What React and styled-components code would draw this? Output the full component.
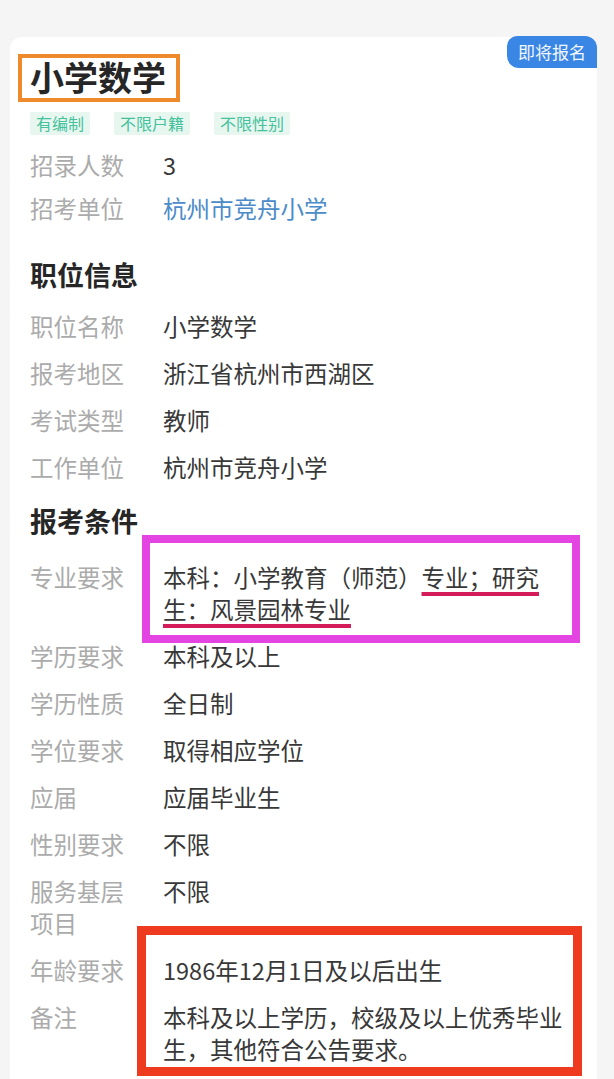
import styled, { createGlobalStyle } from "styled-components";

const GlobalStyle = createGlobalStyle`
  body {
    margin: 0;
    background: #f5f5f5;
    font-family: "Noto Sans CJK SC", "Noto Sans", sans-serif;
  }
`;

function Row({ label, blue, children }) {
  return (
    <RowWrap>
      <Label>{label}</Label>
      <Value $blue={blue}>{children}</Value>
    </RowWrap>
  );
}

function App() {
  return (
    <Page>
      <GlobalStyle />
      <Card>
        <Badge>即将报名</Badge>

        <Title>
          小学数学
          <Frame $color="#ef8a2c" $width={4} $top={-3} $left={-12} $right={-14} $bottom={-5} />
        </Title>

        <Tags>
          <Tag>有编制</Tag>
          <Tag>不限户籍</Tag>
          <Tag>不限性别</Tag>
        </Tags>

        <List $top={14} $gap={11}>
          <Row label="招录人数">3</Row>
          <Row label="招考单位" blue>
            杭州市竞舟小学
          </Row>
        </List>

        <Heading $top={33}>职位信息</Heading>
        <List $top={17} $gap={15}>
          <Row label="职位名称">小学数学</Row>
          <Row label="报考地区">浙江省杭州市西湖区</Row>
          <Row label="考试类型">教师</Row>
          <Row label="工作单位">杭州市竞舟小学</Row>
        </List>

        <Heading $top={20}>报考条件</Heading>
        <List $top={22} $gap={15}>
          <RowWrap>
            <Label>专业要求</Label>
            <Value>
              本科：小学教育（师范）<Marked>专业；研究</Marked>
              <Marked>生：风景园林专业</Marked>
              <Frame $color="#e445e2" $width={8} $top={-26} $left={-21} $right={-7} $bottom={-18} />
            </Value>
          </RowWrap>
          <Row label="学历要求">本科及以上</Row>
          <Row label="学历性质">全日制</Row>
          <Row label="学位要求">取得相应学位</Row>
          <Row label="应届">应届毕业生</Row>
          <Row label="性别要求">不限</Row>
          <Row label="服务基层项目">不限</Row>
          <Group>
            <Row label="年龄要求">1986年12月1日及以后出生</Row>
            <Row label="备注">本科及以上学历，校级及以上优秀毕业生，其他符合公告要求。</Row>
            <Frame $color="#ee3a1e" $width={9} $top={-28} $left={107} $right={-9} $bottom={-11} />
          </Group>
        </List>
      </Card>
    </Page>
  );
}

const Page = styled.div`
  padding: 37px 17px 0 10px;
`;

const Card = styled.div`
  position: relative;
  display: flex;
  flex-direction: column;
  background: #fff;
  border-radius: 12px 12px 0 0;
  padding: 20px 24px 40px 20px;
`;

const Badge = styled.div`
  position: absolute;
  top: -1px;
  right: 0;
  height: 32px;
  padding: 0 11px;
  font-size: 17px;
  line-height: 32px;
  color: #f2f7ff;
  background: #3a86e5;
  border-radius: 10px 12px 0 12px;
`;

const Title = styled.h1`
  position: relative;
  align-self: flex-start;
  margin: 0;
  font-size: 34px;
  line-height: 40px;
  font-weight: 700;
  color: #262626;
`;

const Frame = styled.span`
  position: absolute;
  top: ${(p) => p.$top}px;
  left: ${(p) => p.$left}px;
  right: ${(p) => p.$right}px;
  bottom: ${(p) => p.$bottom}px;
  border: ${(p) => p.$width}px solid ${(p) => p.$color};
  pointer-events: none;
`;

const Tags = styled.div`
  display: flex;
  gap: 24px;
  margin-top: 15px;
`;

const Tag = styled.span`
  padding: 0 6px;
  font-size: 16px;
  line-height: 23px;
  color: #45c19c;
  background: #e7f7f0;
  border-radius: 2px;
`;

const List = styled.div`
  display: flex;
  flex-direction: column;
  gap: ${(p) => p.$gap}px;
  margin-top: ${(p) => p.$top}px;
`;

const Group = styled.div`
  position: relative;
  display: flex;
  flex-direction: column;
  gap: 15px;
`;

const RowWrap = styled.div`
  display: flex;
  font-size: 23.5px;
  line-height: 32px;
`;

const Label = styled.div`
  flex: 0 0 133px;
  box-sizing: border-box;
  padding-right: 33px;
  color: #ababab;
`;

const Value = styled.div`
  position: relative;
  flex: 1;
  color: ${(p) => (p.$blue ? "#4b8bc9" : "#383838")};
`;

const Marked = styled.span`
  text-decoration: underline;
  text-decoration-color: #d41c5a;
  text-decoration-thickness: 4px;
  text-underline-offset: 5px;
  text-decoration-skip-ink: none;
`;

const Heading = styled.h2`
  margin: ${(p) => p.$top}px 0 0;
  font-size: 27px;
  line-height: 36px;
  font-weight: 700;
  color: #262626;
`;

export default App;
